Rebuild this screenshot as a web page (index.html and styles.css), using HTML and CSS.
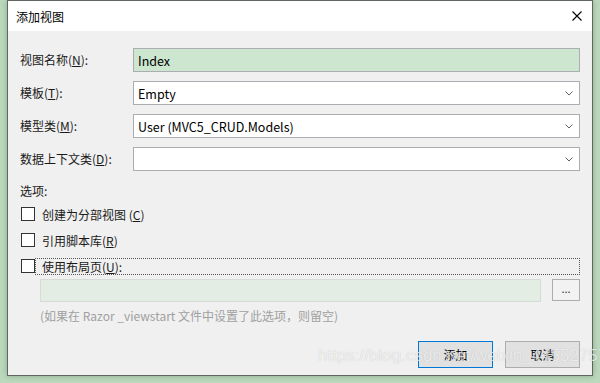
FILE: index.html
```html
<!DOCTYPE html>
<html lang="zh-CN">
<head>
  <meta charset="UTF-8" />
  <title>添加视图</title>
  <link rel="stylesheet" href="styles.css">
</head>
<body>
  <div class="dialog">
    <div class="title-bar">
      <span class="title">添加视图</span>
      <svg class="close" width="10" height="10" viewBox="0 0 10 10">
        <path d="M0.5 0.5 L9.5 9.5 M9.5 0.5 L0.5 9.5" stroke="#000" stroke-width="1.1" fill="none"/>
      </svg>
    </div>

    <div class="content">
      <div class="form-grid">
        <label>视图名称(<u>N</u>):</label>
        <div class="field name-field">Index</div>

        <label>模板(<u>T</u>):</label>
        <div class="field combo">Empty
          <svg class="chevron" width="8" height="5" viewBox="0 0 8 5"><path d="M0.5 0.5 L4 4 L7.5 0.5" stroke="#606060" fill="none"/></svg>
        </div>

        <label>模型类(<u>M</u>):</label>
        <div class="field combo">User (MVC5_CRUD.Models)
          <svg class="chevron" width="8" height="5" viewBox="0 0 8 5"><path d="M0.5 0.5 L4 4 L7.5 0.5" stroke="#606060" fill="none"/></svg>
        </div>

        <label>数据上下文类(<u>D</u>):</label>
        <div class="field combo">
          <svg class="chevron" width="8" height="5" viewBox="0 0 8 5"><path d="M0.5 0.5 L4 4 L7.5 0.5" stroke="#606060" fill="none"/></svg>
        </div>
      </div>

      <div class="options">
        <div class="options-title">选项:</div>
        <div class="check-row"><span class="box"></span><span>创建为分部视图 (<u>C</u>)</span></div>
        <div class="check-row"><span class="box"></span><span>引用脚本库(<u>R</u>)</span></div>
        <div class="check-row"><span class="box"></span><span class="focus">使用布局页(<u>U</u>):</span></div>
      </div>

      <div class="layout-row">
        <div class="layout-input"></div>
        <div class="browse">...</div>
      </div>
      <div class="hint">(如果在 Razor _viewstart 文件中设置了此选项，则留空)</div>

      <div class="buttons">
        <button class="btn primary">添加</button>
        <button class="btn">取消</button>
      </div>
    </div>
  </div>

  <div class="watermark">https://blog.csdn.net/weixin_44552757</div>
</body>
</html>
```

FILE: styles.css
```css
body {
  margin: 0;
  padding: 0;
  width: 600px;
  height: 383px;
  overflow: hidden;
  background-color: #bcd9be;
  font-family: "Noto Sans CJK SC", sans-serif;
  font-size: 12px;
  color: #1a1a1a;
}

.dialog {
  margin-left: 7px;
  width: 584px;
  height: 374px;
  border: 1px solid #5f6660;
  background-color: #f0f0f0;
  box-shadow: 0 0 6px rgba(40, 80, 40, 0.35);
}

.title-bar {
  height: 30px;
  background-color: #fff;
  display: flex;
  align-items: center;
  justify-content: space-between;
  padding: 0 10px 0 8px;
}

.title {
  font-size: 12px;
  color: #000;
}

.content {
  padding: 17px 12px 0 12px;
}

.form-grid {
  display: grid;
  grid-template-columns: 113px 1fr;
  grid-auto-rows: 24px;
  row-gap: 9px;
  align-items: center;
}

.form-grid label {
  line-height: 24px;
}

.field {
  height: 24px;
  box-sizing: border-box;
  border: 1px solid #abadb3;
  background-color: #fff;
  padding-left: 4px;
  line-height: 21px;
  font-size: 12.5px;
  color: #000;
  display: flex;
  align-items: center;
  position: relative;
}

.name-field {
  background-color: #cce6cf;
}

.chevron {
  position: absolute;
  right: 6px;
  top: 9px;
}

.options {
  margin-top: 10px;
}

.options-title {
  height: 20px;
  line-height: 20px;
}

.check-row {
  height: 26px;
  display: flex;
  align-items: center;
}

.check-row .box {
  width: 12px;
  height: 12px;
  border: 1px solid #333;
  background-color: #fff;
  margin-left: 1px;
  margin-right: 7px;
  flex-shrink: 0;
}

.focus {
  flex: 1;
  margin-left: -7px;
  padding-left: 6px;
  height: 15px;
  line-height: 15px;
  border: 1px dotted #555;
}

.layout-row {
  display: flex;
  margin-left: 20px;
  height: 23px;
}

.layout-input {
  width: 501px;
  height: 21px;
  border: 1px solid #d5dcd5;
  background-color: #e3ede3;
}

.browse {
  margin-left: 11px;
  width: 26px;
  height: 20px;
  border: 1px solid #adadad;
  background-color: #f2f2f2;
  text-align: center;
  line-height: 16px;
  font-size: 11px;
  color: #333;
}

.hint {
  margin-left: 20px;
  margin-top: 6px;
  height: 16px;
  line-height: 16px;
  color: #a0a0a0;
}

.buttons {
  display: flex;
  justify-content: flex-end;
  gap: 12px;
  margin-top: 17px;
}

.btn {
  width: 75px;
  height: 27px;
  border: 1px solid #adadad;
  background-color: #e1e1e1;
  font-family: "Noto Sans CJK SC", sans-serif;
  font-size: 12px;
  color: #000;
  padding: 0;
}

.btn.primary {
  border: 1px solid #0078d7;
}

.watermark {
  position: absolute;
  left: 318px;
  top: 346px;
  white-space: nowrap;
  font-family: "Liberation Sans", sans-serif;
  font-size: 17px;
  color: rgba(255, 255, 255, 0.7);
  text-shadow: 0 0 1px rgba(0, 0, 0, 0.2);
}
```
